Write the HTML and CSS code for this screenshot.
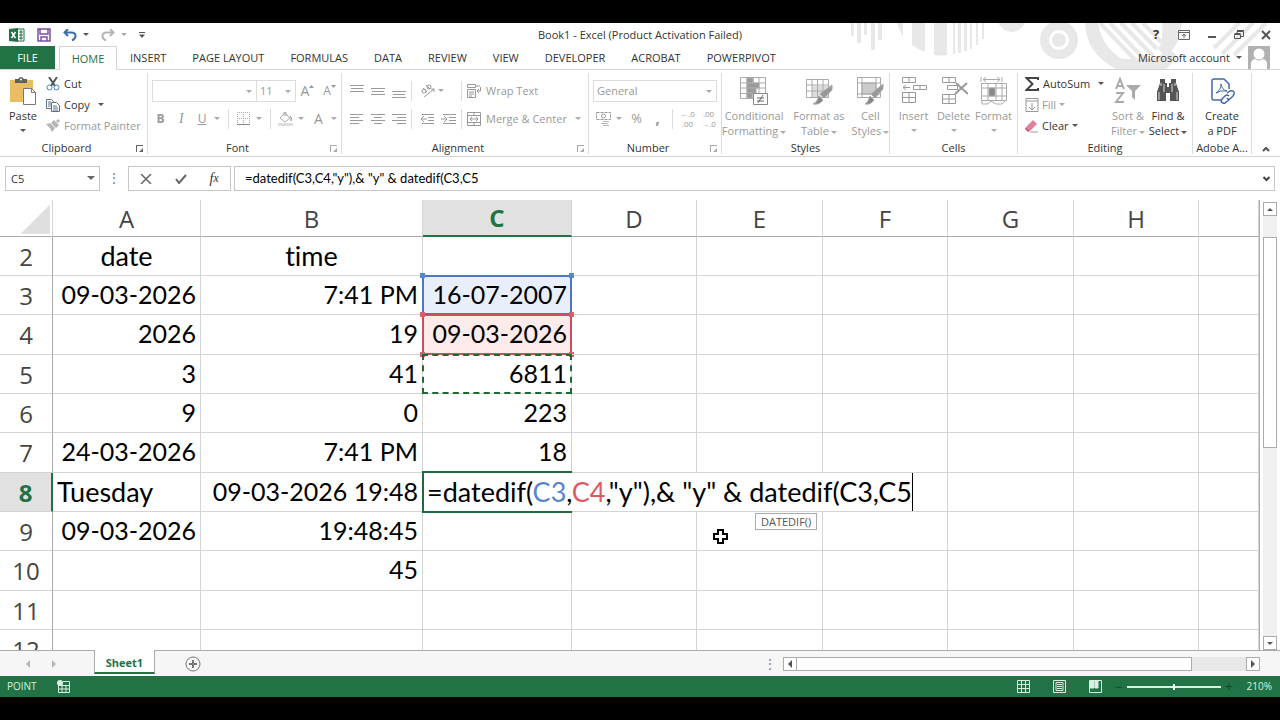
FILE: index.html
```html
<!DOCTYPE html>
<html lang="en">
<head>
  <meta charset="utf-8">
  <title>Book1 - Excel</title>
  <link rel="stylesheet" href="styles.css">
</head>
<body>
<div class="app">
  <header class="top">
    <!-- title bar decoration -->
    <svg class="decor" width="430" height="46" viewBox="850 23 430 46" fill="#e8e8e8">
      <path d="M851 23h3v13h-3zM857 23h4v20h-4zM864 23h3v12h-3zM871 23h4v27h-4zM878 23h4v17h-4zM897 23h6v14q-3-6-6-14z"/>
      <path d="M912 23h13v29q-8-3-13-7zM934 23h13v32q-7 1-13 0zM953 23h2v31h-2zM958 23h3v30h-3zM964 23h3v28h-3zM970 23h2v26h-2zM976 23h2v22h-2zM982 23h2v16h-2z"/>
      <path d="M998 23h27q-5 9-13 9t-14-9z"/>
      <circle cx="1059" cy="40" r="14.500" fill="none" stroke="#e8e8e8" stroke-width="9"/>
      <circle cx="1059" cy="40" r="7"/>
      <path d="M1085 23h13q4 24 24 36h30q10-4 18-10l8 8-12 12h-50q-30-16-31-46z"/>
      <path d="M1100 23l40 42M1110 23l38 40M1121 23l32 33M1132 23l25 26M1143 23l18 19M1234 55l32-32M1222 54l31-31M1214 48l25-25" stroke="#e8e8e8" stroke-width="4"/>
      <path d="M1162 23h20q-2 22-16 34l-8-8q6-10 4-26z"/>
    </svg>
    <div class="titlebar">
      <div class="quick">
        <svg width="16" height="14" viewBox="0 0 16 14"><path d="M8 1h7v12H8z" fill="#fff" stroke="#217346"/><path d="M10 4h4M10 7h4M10 10h4M12 2v10" stroke="#217346"/><path d="M0 1l9-1v14l-9-1z" fill="#217346"/><path d="M2.500 4l4 6M6.500 4l-4 6" stroke="#fff" stroke-width="1.500"/></svg>
        <button class="icon-btn" aria-label="Save"><svg width="14" height="14" viewBox="0 0 14 14" fill="none" stroke="#7a4fa3" stroke-width="1.500"><path d="M1 1h12v12H1zM3 1v5h8V1M4 13V9h6v4"/></svg></button>
        <button class="icon-btn" aria-label="Undo"><svg width="14" height="12" viewBox="0 0 14 12" fill="none" stroke="#3a6ea8" stroke-width="2"><path d="M5 0L1.500 3.500 5 7M2 3.500h6q5 0 4.500 4-.5 3-3.500 4"/></svg><span class="arrow dark"></span></button>
        <button class="icon-btn" aria-label="Redo"><svg width="14" height="12" viewBox="0 0 14 12" fill="none" stroke="#b5b5b5" stroke-width="2"><path d="M9 0l3.500 3.500L9 7M12 3.500H6q-5 0-4.500 4 .5 3 3.500 4"/></svg><span class="arrow"></span></button>
        <button class="icon-btn" aria-label="Customize"><svg width="6" height="6" viewBox="0 0 6 6" fill="#555"><path d="M0 0h6v1H0zM0 2.500h6L3 6z"/></svg></button>
      </div>
      <div class="title">Book1 - Excel (Product Activation Failed)</div>
      <div class="window-btns">
        <button class="icon-btn help" aria-label="Help">?</button>
        <button class="icon-btn" aria-label="Ribbon display"><svg width="12" height="10" viewBox="0 0 12 10" fill="none" stroke="#666"><path d="M.5.5h11v9H.5zM.5 2.500h11M6 8V4M4 6l2-2 2 2"/></svg></button>
        <button class="icon-btn" aria-label="Minimize"><svg width="10" height="10" viewBox="0 0 10 10"><path d="M1 6h8v2H1z" fill="#555"/></svg></button>
        <button class="icon-btn" aria-label="Restore"><svg width="10" height="10" viewBox="0 0 10 10" fill="none" stroke="#555"><path d="M.5 4.500h6v4h-6zM.5 3.500h6M3 3V1.500h6.500v5H7M3 .5h7"/></svg></button>
        <button class="icon-btn" aria-label="Close"><svg width="10" height="10" viewBox="0 0 10 10" stroke="#555" stroke-width="2"><path d="M1 1l8 8M9 1L1 9"/></svg></button>
      </div>
    </div>
    <nav class="tabs">
      <button class="tab file">FILE</button>
      <button class="tab active">HOME</button>
      <button class="tab">INSERT</button>
      <button class="tab">PAGE LAYOUT</button>
      <button class="tab">FORMULAS</button>
      <button class="tab">DATA</button>
      <button class="tab">REVIEW</button>
      <button class="tab">VIEW</button>
      <button class="tab">DEVELOPER</button>
      <button class="tab">ACROBAT</button>
      <button class="tab">POWERPIVOT</button>
      <button class="account">Microsoft account <span class="arrow dark"></span>
        <svg width="22" height="23" viewBox="0 0 22 23"><path d="M0 0h22v23H0z" fill="#b1b1b1"/><path d="M3 23v-6q1-4 5-4h6q4 0 5 4v6z" fill="#fff"/><circle cx="11" cy="8" r="6" fill="#fff" stroke="#b1b1b1"/></svg>
      </button>
    </nav>
  </header>

  <section class="ribbon">
    <div class="group clipboard">
      <div class="group-body">
        <button class="big">
          <svg width="28" height="28" viewBox="0 0 28 28"><path d="M1 3h23v22H1z" fill="#e9bd62"/><path d="M6 6V2h3q3-4 6 0h3v4z" fill="#606060"/><circle cx="12" cy="2.500" r="1" fill="#fff"/><path d="M14.500 11.500h8l4 4v12h-12z" fill="#fff" stroke="#777"/><path d="M22.500 11.500v4h4" fill="none" stroke="#777"/></svg>
          <span>Paste</span><span class="arrow dark"></span>
        </button>
        <div class="stack">
          <button class="small"><svg width="14" height="14" viewBox="0 0 14 14" fill="none"><path d="M3 0l6 9M11 0L5 9" stroke="#555" stroke-width="2"/><circle cx="3.500" cy="10.500" r="2.500" stroke="#4a7ebb"/><circle cx="10.500" cy="10.500" r="2.500" stroke="#4a7ebb"/></svg>Cut</button>
          <button class="small"><svg width="14" height="14" viewBox="0 0 14 14" fill="#fff" stroke="#5b7288"><path d="M.5 1.500h5l2 2v7h-7zM2 4h3M2 6h3M2 8h3"/><path d="M5.500 4.500h5l3 3v6h-8zM7 8h4M7 10h5M7 12h5"/></svg>Copy <span class="arrow dark"></span></button>
          <button class="small dim"><svg width="14" height="14" viewBox="0 0 14 14" fill="#b5b5b5"><path d="M0 5l4-1 5 5-3 4q-2-5-6-8zM5 4l3-3 5 5-3 3zM10 2l2-2 2 2-2 2z"/></svg>Format Painter</button>
        </div>
      </div>
      <div class="group-name wide">Clipboard<i class="launcher dark"></i></div>
    </div>

    <div class="group font">
      <div class="group-body rows">
        <div class="row">
          <label class="combo face"><select aria-label="Font"><option></option></select></label>
          <label class="combo size"><select aria-label="Font size"><option>11</option></select></label>
          <button class="tool grow" aria-label="Increase font size">A<svg width="5" height="3" viewBox="0 0 5 3"><path d="M0 3l2.500-3L5 3z" fill="#999"/></svg></button>
          <button class="tool shrink" aria-label="Decrease font size">A<svg width="5" height="3" viewBox="0 0 5 3"><path d="M0 0l2.500 3L5 0z" fill="#999"/></svg></button>
        </div>
        <div class="row">
          <button class="tool letter"><b>B</b></button>
          <button class="tool letter serif"><i>I</i></button>
          <button class="tool letter"><u>U</u></button><span class="arrow"></span>
          <span class="sep"></span>
          <button class="tool" aria-label="Borders"><svg width="13" height="13" viewBox="0 0 13 13" fill="none" stroke="#aaa"><path d="M.5 0v12M6.500 0v12M12.500 0v12M0 .5h13M0 6.500h13" stroke-dasharray="1 1"/><path d="M0 12.500h13" stroke="#888"/></svg></button><span class="arrow"></span>
          <span class="sep"></span>
          <button class="tool" aria-label="Fill color"><svg width="15" height="14" viewBox="0 0 15 14" fill="none" stroke="#aaa"><path d="M2 6l5-5 5 5-5 4zM6 4V0h2v4"/><path d="M12 4q3 2 1 5V5z" fill="#888"/><path d="M0 11h15v3H0z" fill="#ddd" stroke="none"/></svg></button><span class="arrow"></span>
          <button class="tool fontcolor">A</button><span class="arrow"></span>
        </div>
      </div>
      <div class="group-name wide">Font<i class="launcher"></i></div>
    </div>

    <div class="group align">
      <div class="group-body rows">
        <div class="row">
          <button class="tool" aria-label="Top align"><svg width="14" height="14" viewBox="0 0 14 14" stroke="#999"><path d="M0 1.500h14M1 4.500h12M0 7.500h14"/></svg></button>
          <button class="tool" aria-label="Middle align"><svg width="14" height="14" viewBox="0 0 14 14" stroke="#999"><path d="M0 4.500h14M1 7.500h12M0 10.500h14"/></svg></button>
          <button class="tool" aria-label="Bottom align"><svg width="14" height="14" viewBox="0 0 14 14" stroke="#999"><path d="M0 7.500h14M1 10.500h12M0 13.500h14"/></svg></button>
          <span class="sep"></span>
          <span class="pair">
            <button class="tool" aria-label="Orientation"><svg width="16" height="14" viewBox="0 0 16 14" fill="none" stroke="#999"><circle cx="4" cy="7" r="2"/><path d="M3 4l4 4M6 1l4 4M4 13L14 5M11 5h3v3"/><circle cx="9" cy="3" r="2"/></svg></button><span class="arrow"></span>
          </span>
          <span class="sep"></span>
          <button class="small dim"><svg width="15" height="14" viewBox="0 0 15 14" fill="none" stroke="#999"><path d="M.5.5h8v3h-8zM8 2h5M.5 5.500h8v8h-8zM2 8h5M2 10h5M2 12h3M13.500 3v4H10M12 5l-2 2 2 2"/></svg>Wrap Text</button>
        </div>
        <div class="row">
          <button class="tool" aria-label="Align left"><svg width="14" height="11" viewBox="0 0 14 11" stroke="#999"><path d="M0 1.500h13M0 4.500h9M0 7.500h13M0 10.500h9"/></svg></button>
          <button class="tool" aria-label="Center"><svg width="14" height="11" viewBox="0 0 14 11" stroke="#999"><path d="M0 1.500h14M3 4.500h8M0 7.500h14M3 10.500h8"/></svg></button>
          <button class="tool" aria-label="Align right"><svg width="14" height="11" viewBox="0 0 14 11" stroke="#999"><path d="M0 1.500h14M5 4.500h9M0 7.500h14M5 10.500h9"/></svg></button>
          <span class="sep"></span>
          <span class="pair">
            <button class="tool" aria-label="Decrease indent"><svg width="15" height="11" viewBox="0 0 15 11" fill="none" stroke="#999"><path d="M2 1.500h12M8 4.500h6M8 7.500h6M2 10.500h12M7 6H1M4 3L1 6l3 3"/></svg></button>
            <button class="tool" aria-label="Increase indent"><svg width="15" height="11" viewBox="0 0 15 11" fill="none" stroke="#999"><path d="M2 1.500h13M8 4.500h7M8 7.500h7M2 10.500h13M0 6h6M3 3l3 3-3 3"/></svg></button>
          </span>
          <span class="sep"></span>
          <button class="small dim"><svg width="15" height="14" viewBox="0 0 15 14" fill="none" stroke="#999"><path d="M.5.500h13v13H.5zM.5 3.500h13M.5 10.500h13M7 0v3M7 11v3M3 7h8M5 5L3 7l2 2M9 5l2 2-2 2"/></svg>Merge &amp; Center <span class="arrow"></span></button>
        </div>
      </div>
      <div class="group-name wide">Alignment<i class="launcher"></i></div>
    </div>

    <div class="group number">
      <div class="group-body rows">
        <div class="row">
          <label class="combo format"><select aria-label="Number format"><option>General</option></select></label>
        </div>
        <div class="row">
          <button class="tool" aria-label="Currency"><svg width="15" height="14" viewBox="0 0 15 14" fill="none" stroke="#999"><path d="M.5.500h14v7H.5z" stroke-dasharray="3 1"/><circle cx="7.500" cy="4" r="2"/><path d="M7 9.500h6M5 11.500h7M7 13.500h6" stroke="#bbb"/></svg></button><span class="arrow"></span>
          <button class="tool percent">%</button>
          <button class="tool comma">,</button>
          <span class="sep"></span>
          <button class="tool decimal">←.0<br>.00</button>
          <button class="tool decimal">.00<br>→.0</button>
        </div>
      </div>
      <div class="group-name wide">Number<i class="launcher"></i></div>
    </div>

    <div class="group styles">
      <div class="group-body">
        <button class="big dim">
          <svg width="28" height="28" viewBox="0 0 28 28" fill="none" stroke="#aaa"><path d="M.5.500h25v21H.5zM.5 6h25M.5 11h25M.5 16.500h25M7 0v21M13 0v21M19 0v21"/><path d="M7 1h6v5H7zM7 6h12v5H7zM7 11h9v5H7zM7 16h5v5H7z" fill="#999"/><path d="M13.500 16.500h14v11h-14z" fill="#fff" stroke="#888"/><path d="M17 21h7M17 24h7M23 18l-5 8" stroke="#666"/></svg>
          <span>Conditional</span><span>Formatting<i class="arrow"></i></span>
        </button>
        <button class="big dim">
          <svg width="28" height="28" viewBox="0 0 28 28" fill="none" stroke="#aaa"><path d="M7 9h17v12H7z" fill="#ddd" stroke="none"/><path d="M1.500 2.500h22v18h-22zM1.500 8h22M1.500 14h22M7 3v18M12.500 3v18M18 3v18"/><path d="M27 8v5l-8 8-4-4z" fill="#999"/><path d="M14 19l4 4q-3 5-10 4 4-1 6-8z" fill="#888"/></svg>
          <span>Format as</span><span>Table<i class="arrow"></i></span>
        </button>
        <button class="big dim">
          <svg width="28" height="28" viewBox="0 0 28 28" fill="none" stroke="#aaa"><path d="M6 6h14v11H6z" fill="#ccc"/><path d="M1.500.5h23v20h-23zM1.500 6h23M1.500 17h23M6 0v20M20 0v20"/><path d="M27 7v5l-8 9-4-4z" fill="#999"/><path d="M14 19l4 4q-3 5-9 4 3-1 5-8z" fill="#888"/></svg>
          <span>Cell</span><span>Styles<i class="arrow"></i></span>
        </button>
      </div>
      <div class="group-name">Styles</div>
    </div>

    <div class="group cells">
      <div class="group-body">
        <button class="big dim">
          <svg width="28" height="28" viewBox="0 0 28 28" fill="none" stroke="#999"><path d="M2.500.5h13v5h-13zM9 .5v5M2.500 15.500h13v10h-13zM9 15.500v10M2.500 20.500h13M13.500 8.500h13v4h-13zM20 8.500v4M10 10.500H3M6 8l-3 2.500L6 13"/></svg>
          <span>Insert</span><span class="arrow"></span>
        </button>
        <button class="big dim">
          <svg width="28" height="28" viewBox="0 0 28 28" fill="none" stroke="#999"><path d="M2.500.5h13v5h-13zM9 .5v5M2.500 17.500h13v9h-13zM9 17.500v9M2.500 22h13M7.500 8.500h10v4h-10z"/><path d="M16 6l12 11M27 6L15 17" stroke-width="2"/></svg>
          <span>Delete</span><span class="arrow"></span>
        </button>
        <button class="big dim">
          <svg width="28" height="28" viewBox="0 0 28 28" fill="none" stroke="#aaa"><path d="M1 0v5M22 0v5M3 2.500h17M6 0L3 2.500 6 5M17 0l3 2.500L17 5"/><path d="M1.500 6.500h25v17h-25zM1.500 11h25M1.500 19h25M8 6v17M16 6v17M22 6v17M2 24v3h6l3-3 5 3h6l3-3"/><path d="M9 11h6v8H9z" fill="#888"/></svg>
          <span>Format</span><span class="arrow"></span>
        </button>
      </div>
      <div class="group-name">Cells</div>
    </div>

    <div class="group editing">
      <div class="group-body">
        <div class="stack">
          <button class="small"><svg width="14" height="14" viewBox="0 0 14 14" fill="none" stroke="#444" stroke-width="2"><path d="M13 3V1H1.500l6 6-6 6H13v-2"/></svg>AutoSum <span class="arrow dark"></span></button>
          <button class="small tight dim"><svg width="14" height="14" viewBox="0 0 14 14" fill="none" stroke="#999"><path d="M1 .5h12v13H1zM1 3h12M7 5v7M4 9l3 3 3-3"/></svg>Fill <span class="arrow"></span></button>
          <button class="small tight"><svg width="14" height="14" viewBox="0 0 14 14"><path d="M1 8l7-7 4 4-7 7z" fill="#e0819b"/><path d="M1 8l4 4-2 1-3-3z" fill="#c3567a"/><path d="M5 13h8" stroke="#999"/></svg>Clear <span class="arrow dark"></span></button>
        </div>
        <button class="big dim">
          <svg width="28" height="28" viewBox="0 0 28 28" fill="none" stroke="#aaa" stroke-width="2"><path d="M2 12L6 2l4 10M3 9h6M2 16h7l-7 9h8"/><path d="M12 8h15l-6 6v9l-3-3v-6z" fill="#aaa" stroke="none"/></svg>
          <span>Sort &amp;</span><span>Filter<i class="arrow"></i></span>
        </button>
        <button class="big">
          <svg width="26" height="28" viewBox="0 0 26 28" fill="#555"><path d="M5 2h5v4h2v4h2V6h2V2h5v4l3 9v9h-9v-8h-4v8H2v-9l3-9z"/><path d="M6 6v3M20 6v3M4 15v8M22 15v8M9 7v8M17 7v8" stroke="#ddd"/></svg>
          <span>Find &amp;</span><span>Select<i class="arrow dark"></i></span>
        </button>
      </div>
      <div class="group-name">Editing</div>
    </div>

    <div class="group adobe">
      <div class="group-body">
        <button class="big">
          <svg width="28" height="28" viewBox="0 0 28 28" fill="none" stroke="#4268a8" stroke-width="1.500"><path d="M14 23H6q-2 0-2-2V4q0-2 2-2h10l5 5v5"/><path d="M8 16q5-3 5-9 1 6 6 7-7-1-11 2z" stroke-width="1"/><path d="M19 16l3-2q3-1 4 1t-1 4l-3 3q-2 1-3-1M21 19q-2-2-4 0l-3 3q-2 3 1 4 2 1 3-1l3-2"/></svg>
          <span>Create</span><span>a PDF</span>
        </button>
      </div>
      <div class="group-name">Adobe A...</div>
    </div>
    <button class="icon-btn collapse" aria-label="Collapse ribbon"><svg width="8" height="6" viewBox="0 0 8 6" fill="none" stroke="#555" stroke-width="2"><path d="M1 5l3-3 3 3"/></svg></button>
  </section>

  <section class="formula-bar">
    <label class="namebox"><select aria-label="Name box"><option>C5</option></select></label>
    <span class="dots">⋮</span>
    <div class="formula-btns">
      <button class="icon-btn" aria-label="Cancel"><svg width="12" height="10" viewBox="0 0 12 10" stroke="#666" stroke-width="1.500"><path d="M1 0l10 10M11 0L1 10"/></svg></button>
      <button class="icon-btn" aria-label="Enter"><svg width="12" height="10" viewBox="0 0 12 10" fill="none" stroke="#666" stroke-width="2"><path d="M1 5l3 4 7-8"/></svg></button>
      <button class="icon-btn fx" aria-label="Insert function">f<small>x</small></button>
    </div>
    <div class="formula-input">
      <input type="text" aria-label="Formula" value='=datedif(C3,C4,"y"),&amp; "y" &amp; datedif(C3,C5'>
      <button class="icon-btn" aria-label="Expand"><svg width="7" height="6" viewBox="0 0 7 6" fill="none" stroke="#444" stroke-width="2"><path d="M.5 1l3 3 3-3"/></svg></button>
    </div>
  </section>

  <main class="sheet">
    <div class="grid">
      <table>
        <colgroup>
          <col class="c-head"><col class="c-a"><col class="c-b"><col class="c-c"><col class="c-d"><col class="c-e"><col class="c-d"><col class="c-e"><col class="c-d"><col>
        </colgroup>
        <thead>
          <tr><th class="corner"></th><th>A</th><th>B</th><th class="selected">C</th><th>D</th><th>E</th><th>F</th><th>G</th><th>H</th><th></th></tr>
        </thead>
        <tbody>
          <tr><th>2</th><td class="word mid">date</td><td class="word mid">time</td><td></td><td></td><td></td><td></td><td></td><td></td><td></td></tr>
          <tr><th>3</th><td>09-03-2026</td><td>7:41 PM</td><td class="ref blue">16-07-2007</td><td></td><td></td><td></td><td></td><td></td><td></td></tr>
          <tr><th>4</th><td>2026</td><td>19</td><td class="ref red">09-03-2026</td><td></td><td></td><td></td><td></td><td></td><td></td></tr>
          <tr><th>5</th><td>3</td><td>41</td><td class="ants">6811</td><td></td><td></td><td></td><td></td><td></td><td></td></tr>
          <tr><th>6</th><td>9</td><td>0</td><td>223</td><td></td><td></td><td></td><td></td><td></td><td></td></tr>
          <tr><th>7</th><td>24-03-2026</td><td>7:41 PM</td><td>18</td><td></td><td></td><td></td><td></td><td></td><td></td></tr>
          <tr><th class="selected">8</th><td class="word left">Tuesday</td><td>09-03-2026 19:48</td>
            <td class="editing-cell">
              <div class="editor word"><span class="typed">=datedif(<span class="blue-text">C3</span>,<span class="red-text">C4</span>,"y"),&amp; "y" &amp; datedif(C3,C5</span></div>
              <div class="tip">DATEDIF()</div>
            </td><td></td><td></td><td></td><td></td><td></td><td></td></tr>
          <tr><th>9</th><td>09-03-2026</td><td>19:48:45</td><td></td><td></td><td><svg class="pointer" width="15" height="15" viewBox="0 0 15 15"><path d="M5 1h5v4h4v5h-4v4H5v-4H1V5h4z" fill="#fff" stroke="#000" stroke-width="2"/></svg></td><td></td><td></td><td></td><td></td></tr>
          <tr><th>10</th><td></td><td>45</td><td></td><td></td><td></td><td></td><td></td><td></td><td></td></tr>
          <tr><th>11</th><td></td><td></td><td></td><td></td><td></td><td></td><td></td><td></td><td></td></tr>
          <tr><th>12</th><td></td><td></td><td></td><td></td><td></td><td></td><td></td><td></td><td></td></tr>
        </tbody>
      </table>
    </div>
    <div class="vscroll">
      <button class="scroll-btn" aria-label="Scroll up"><i class="up"></i></button>
      <div class="vtrack"><div class="vthumb"></div></div>
      <button class="scroll-btn" aria-label="Scroll down"><i class="down"></i></button>
    </div>
  </main>

  <div class="sheetbar">
    <button class="icon-btn nav" aria-label="Previous sheet"><i class="tri-left"></i></button>
    <button class="icon-btn nav" aria-label="Next sheet"><i class="tri-right"></i></button>
    <button class="sheet-tab">Sheet1</button>
    <button class="icon-btn add" aria-label="New sheet"><svg width="16" height="16" viewBox="0 0 16 16" fill="none" stroke="#777"><circle cx="8" cy="8" r="7"/><path d="M8 4v8M4 8h8" stroke-width="2"/></svg></button>
    <span class="dots">⋮</span>
    <div class="hscroll">
      <button class="scroll-btn" aria-label="Scroll left"><i class="tri-left"></i></button>
      <div class="htrack"><div class="hthumb"></div></div>
      <button class="scroll-btn" aria-label="Scroll right"><i class="tri-right"></i></button>
    </div>
  </div>

  <footer class="status">
    <span>POINT</span>
    <svg class="macro" width="13" height="13" viewBox="0 0 13 13" fill="none" stroke="#d9f0e1"><path d="M1.500 4v8.500h11v-11H6M1 5.500h12M1 9h12M5 6v6M9 6v6"/><circle cx="3" cy="3" r="3" fill="#d9f0e1" stroke="none"/></svg>
    <div class="views">
      <button class="icon-btn" aria-label="Normal"><svg width="13" height="13" viewBox="0 0 13 13" fill="none" stroke="#d9f0e1"><path d="M.5.500h12v12H.5zM0 4.500h13M0 8.500h13M4.500 0v13M8.500 0v13"/></svg></button>
      <button class="icon-btn" aria-label="Page layout"><svg width="13" height="13" viewBox="0 0 13 13" fill="none" stroke="#d9f0e1"><path d="M.5.500h12v12H.5zM3 2.500h7v8H3zM4 4.500h5M4 6.500h5M4 8.500h5"/></svg></button>
      <button class="icon-btn" aria-label="Page break"><svg width="13" height="13" viewBox="0 0 13 13" fill="none" stroke="#d9f0e1"><path d="M.5.500h12v12H.5z"/><path d="M1 1h4v7H1zM6 1h3v7H6z" fill="#d9f0e1"/></svg></button>
    </div>
    <button class="icon-btn zoom-btn" aria-label="Zoom out">−</button>
    <input class="zoom" type="range" aria-label="Zoom" min="0" max="100" value="50">
    <button class="icon-btn zoom-btn" aria-label="Zoom in">+</button>
    <span class="percent-text">210%</span>
  </footer>
</div>
</body>
</html>
```
FILE: styles.css
```css
* {
  box-sizing: border-box;
}

body {
  margin: 0;
  background: #000;
  color: #333;
  font-family: "Open Sans", "Noto Sans", sans-serif;
  font-size: 11px;
  line-height: 15px;
}

button, select, input {
  margin: 0;
  padding: 0;
  border: 0;
  background: none;
  color: inherit;
  font: inherit;
}

svg {
  display: block;
  flex: none;
}

.app {
  display: flex;
  flex-direction: column;
  height: 100vh;
  padding: 23px 0;
}

.icon-btn {
  display: flex;
  align-items: center;
  justify-content: center;
  gap: 7px;
}

.arrow {
  display: inline-block;
  flex: none;
  border: 3px solid transparent;
  border-top-color: #aaa;
  border-bottom: 0;
  vertical-align: middle;
}

.arrow.dark {
  border-top-color: #555;
}

/* Title bar and tabs */
.top {
  position: relative;
  background: #fff;
}

.decor {
  position: absolute;
  top: 0;
  right: 0;
}

.titlebar {
  position: relative;
  display: grid;
  grid-template-columns: 1fr auto 1fr;
  align-items: center;
  height: 23px;
}

.quick {
  display: flex;
  align-items: center;
  gap: 12px;
  padding-left: 9px;
}

.quick .icon-btn {
  gap: 6px;
}

.window-btns {
  display: flex;
  justify-content: flex-end;
  gap: 17px;
  padding-right: 9px;
}

.help {
  width: 10px;
  font-size: 13px;
  font-weight: bold;
}

.tabs {
  position: relative;
  display: flex;
  height: 24px;
  border-bottom: 1px solid #d4d4d4;
}

.tab {
  height: 23px;
  padding: 0 13px;
}

.tab.file {
  width: 55px;
  margin-right: 4px;
  background: #217346;
  color: #fff;
}

.tab.active {
  width: 58px;
  height: 24px;
  padding: 0;
  border: 1px solid #d4d4d4;
  border-bottom: 0;
  background: #fff;
  color: #217346;
}

.account {
  display: flex;
  align-items: center;
  gap: 6px;
  margin-left: auto;
  padding-right: 10px;
}

/* Ribbon */
.ribbon {
  display: flex;
  height: 87px;
  border-bottom: 1px solid #d4d4d4;
  background: #fff;
}

.group {
  display: flex;
  flex-direction: column;
  margin: 3px 0 2px;
  border-right: 1px solid #dcdcdc;
}

.group-body {
  display: flex;
  justify-content: center;
  height: 69px;
}

.group-body.rows {
  flex-direction: column;
  justify-content: flex-start;
  gap: 7px;
  padding: 7px 0 0 4px;
}

.group-name {
  position: relative;
  line-height: 12px;
  text-align: center;
}

.group-name.wide {
  padding-right: 14px;
}

.launcher {
  position: absolute;
  right: 4px;
  bottom: 2px;
  width: 7px;
  height: 7px;
  border-top: 1px solid #aaa;
  border-left: 1px solid #aaa;
}

.launcher::after {
  content: "";
  position: absolute;
  right: 0;
  bottom: 0;
  border: 2px solid #aaa;
  border-top-color: transparent;
  border-left-color: transparent;
}

.launcher.dark, .launcher.dark::after {
  border-right-color: #666;
  border-bottom-color: #666;
}

.launcher.dark {
  border-color: #666;
  border-right: 0;
  border-bottom: 0;
}

.clipboard { width: 148px; }
.font { width: 194px; }
.align { width: 247px; }
.number { width: 133px; }
.styles { width: 168px; }
.cells { width: 128px; }
.editing { width: 175px; }
.adobe { width: 59px; }

.row {
  display: flex;
  align-items: center;
  height: 21px;
}

.row > .arrow {
  margin: 0 4px 0 2px;
}

.big {
  display: flex;
  flex-direction: column;
  align-items: center;
  padding-top: 4px;
  white-space: nowrap;
}

.big svg {
  margin-bottom: 3px;
}

.big > .arrow {
  margin-top: 6px;
}

.big .arrow {
  border-width: 3px 3px 0;
}

.big span .arrow {
  margin-left: 2px;
}

.stack {
  display: flex;
  flex-direction: column;
}

.small {
  display: flex;
  align-items: center;
  gap: 4px;
  height: 21px;
  white-space: nowrap;
}

.small .arrow {
  margin-left: 4px;
}

.small.tight {
  gap: 3px;
}

.small.tight .arrow {
  margin-left: 0;
}

.dim {
  color: #999;
}

.clipboard .group-body {
  justify-content: flex-start;
  padding-left: 4px;
}

.clipboard .big {
  width: 38px;
  margin-right: 4px;
}

.tool {
  display: flex;
  align-items: center;
  justify-content: center;
  width: 21px;
  height: 20px;
  color: #999;
}

.sep {
  width: 1px;
  height: 20px;
  margin: 0 4px;
  background: #dcdcdc;
}

.align .sep {
  margin: 0 5px 0 2px;
}

.pair {
  display: flex;
  align-items: center;
  width: 42px;
}

.combo {
  position: relative;
  display: block;
  height: 22px;
  border: 1px solid #dcdcdc;
  color: #999;
}

.combo select, .namebox select {
  width: 100%;
  height: 100%;
  padding-left: 3px;
  appearance: none;
}

.combo::after, .namebox::after {
  content: "";
  position: absolute;
  top: 9px;
  right: 4px;
  border: 3px solid transparent;
  border-top-color: #aaa;
  border-bottom: 0;
}

.face {
  width: 105px;
}

.size {
  width: 39px;
  border-left: 0;
}

.format {
  width: 124px;
}

.grow, .shrink {
  margin-left: 1px;
  font-size: 14px;
}

.shrink {
  font-size: 12px;
}

.grow svg, .shrink svg {
  margin-bottom: 9px;
}

.font .row + .row {
  margin-left: -2px;
}

.letter {
  font-size: 12px;
}

.serif {
  font-family: "Liberation Serif", serif;
  font-size: 14px;
}

.fontcolor {
  font-size: 14px;
}

.percent {
  font-size: 13px;
}

.comma {
  font-size: 16px;
  font-weight: bold;
}

.decimal {
  font-size: 8px;
  line-height: 10px;
}

.styles .group-body {
  gap: 7px;
}

.cells .group-body {
  gap: 4px;
}

.cells .big {
  width: 36px;
}

.editing .group-body {
  justify-content: flex-start;
  padding-left: 7px;
}

.editing .stack {
  width: 83px;
}

.editing .big {
  width: 40px;
}

.collapse {
  align-self: flex-end;
  margin: 0 auto;
  height: 14px;
}

/* Formula bar */
.formula-bar {
  display: flex;
  gap: 3px;
  height: 43px;
  padding: 9px 5px 9px;
  background: #fff;
}

.namebox, .formula-btns, .formula-input {
  position: relative;
  display: flex;
  border: 1px solid #c6c6c6;
}

.namebox {
  width: 95px;
}

.namebox select {
  padding-left: 5px;
}

.namebox::after {
  border-width: 4px 4px 0;
  border-top-color: #666;
}

.dots {
  width: 22px;
  color: #888;
  font-size: 14px;
  line-height: 24px;
  text-align: center;
}

.formula-btns {
  width: 103px;
  justify-content: space-around;
}

.fx {
  gap: 0;
  font-family: "Liberation Serif", serif;
  font-size: 14px;
  font-style: italic;
}

.formula-input {
  flex: 1;
  padding: 0 4px 0 10px;
}

.formula-input input {
  flex: 1;
  color: #000;
  font-family: Lato, sans-serif;
  font-size: 13px;
}

/* Sheet */
.sheet {
  display: flex;
  flex: 1;
  min-height: 0;
  background: #fff;
}

.grid {
  flex: 1;
  min-width: 0;
  overflow: hidden;
  border-right: 1px solid #ababab;
}

table {
  width: 100%;
  border-spacing: 0;
  table-layout: fixed;
  color: #000;
  font-family: Lato, sans-serif;
  font-size: 25px;
  font-variant-ligatures: none;
  line-height: 35px;
}

.c-head { width: 53px; }
.c-a { width: 148px; }
.c-b { width: 222px; }
.c-c { width: 149px; }
.c-d { width: 125px; }
.c-e { width: 126px; }

th {
  padding: 0;
  border-right: 1px solid #d4d4d4;
  border-bottom: 1px solid #ababab;
  color: #444;
  font-family: "Open Sans", "Noto Sans", sans-serif;
  font-size: 24px;
  font-weight: normal;
}

thead th {
  height: 37px;
}

tbody tr {
  height: 39px;
}

tbody tr:nth-child(3n) {
  height: 40px;
}

tbody th {
  border-right-color: #ababab;
  border-bottom-color: #d4d4d4;
}

th.selected {
  background: #e1e1e1;
  color: #217346;
  font-weight: bold;
}

thead .selected {
  border-bottom: 2px solid #217346;
}

tbody .selected {
  border-right: 2px solid #217346;
}

.corner {
  background: linear-gradient(135deg, transparent 50%, #dfdfdf 50%) 20px 4px / 30px 30px no-repeat;
}

td {
  position: relative;
  padding: 0 4px 2px;
  border-right: 1px solid #d4d4d4;
  border-bottom: 1px solid #d4d4d4;
  text-align: right;
  white-space: nowrap;
}

.word {
  font-size: 27px;
}

.mid {
  text-align: center;
}

.left {
  text-align: left;
}

/* Cells used by the formula */
.ref::before, .ants::before {
  content: "";
  position: absolute;
  inset: -1px;
  border: 2px solid #4a78c4;
}

.ref::after {
  content: "";
  position: absolute;
  inset: -3px;
  background:
    linear-gradient(#5b84cf, #5b84cf) 0 0 / 5px 5px,
    linear-gradient(#5b84cf, #5b84cf) 100% 0 / 5px 5px;
  background-repeat: no-repeat;
}

.blue {
  background: #e9effa;
}

.red {
  background: #fdeaea;
}

.red::before {
  border-color: #c9505f;
}

.red::after {
  background:
    linear-gradient(#d9606b, #d9606b) 0 0 / 5px 5px,
    linear-gradient(#d9606b, #d9606b) 100% 0 / 5px 5px,
    linear-gradient(#d9606b, #d9606b) 0 100% / 5px 5px,
    linear-gradient(#d9606b, #d9606b) 100% 100% / 5px 5px;
  background-repeat: no-repeat;
}

.ants::before {
  border: 2px dashed #1c6b2e;
}

.editing-cell::before {
  content: "";
  position: absolute;
  z-index: 2;
  inset: -2px -1px -2px -1px;
  border: 2px solid #1c6b40;
  border-right: 0;
}

.editor {
  position: absolute;
  z-index: 1;
  top: 0;
  left: 0;
  width: 524px;
  height: 38px;
  padding-left: 4px;
  background: #fff;
  text-align: left;
}

.typed {
  display: inline-block;
  height: 38px;
  border-right: 1px solid #000;
  line-height: 37px;
}

.blue-text {
  color: #5b84cf;
}

.red-text {
  color: #dd5a64;
}

.tip {
  position: absolute;
  z-index: 3;
  top: 40px;
  left: 332px;
  height: 17px;
  padding: 0 5px;
  border: 1px solid #ababab;
  background: #fff;
  color: #555;
  font-family: "Open Sans", "Noto Sans", sans-serif;
  font-size: 11px;
  line-height: 15px;
}

.pointer {
  position: absolute;
  top: 17px;
  left: 16px;
}

/* Scroll bars */
.vscroll {
  display: flex;
  flex-direction: column;
  width: 20px;
  padding: 2px 3px 0;
}

.scroll-btn {
  display: flex;
  align-items: center;
  justify-content: center;
  width: 14px;
  height: 14px;
  border: 1px solid #ababab;
  background: #fff;
}

.vtrack {
  flex: 1;
  padding-top: 21px;
  background: #f0f0f0;
}

.vthumb {
  height: 53%;
  border: 1px solid #ababab;
  background: #fff;
}

.up, .down {
  border: 3px solid transparent;
}

.up {
  border-top: 0;
  border-bottom-color: #555;
}

.down {
  border-bottom: 0;
  border-top-color: #555;
}

.tri-left, .tri-right {
  border: 4px solid transparent;
}

.tri-left {
  border-left: 0;
  border-right-color: #555;
}

.tri-right {
  border-right: 0;
  border-left-color: #555;
}

.sheetbar {
  display: flex;
  align-items: center;
  height: 26px;
  border-top: 1px solid #ababab;
  background: #f6f6f6;
}

.nav {
  width: 26px;
}

.nav:first-child {
  margin-left: 15px;
}

.nav i {
  opacity: .4;
}

.sheet-tab {
  align-self: flex-start;
  width: 61px;
  height: 24px;
  margin: -1px 30px 0 27px;
  padding-top: 2px;
  border: 1px solid #ababab;
  border-top: 0;
  border-bottom: 2px solid #217346;
  background: #fff;
  color: #217346;
  font-weight: bold;
}

.sheetbar .dots {
  margin-left: auto;
}

.hscroll {
  display: flex;
  width: 39%;
  padding: 0 20px 0 2px;
}

.htrack {
  flex: 1;
  background: #e8e8e8;
}

.hthumb {
  width: 88%;
  height: 14px;
  border: 1px solid #ababab;
  border-left: 0;
  background: #fff;
}

/* Status bar */
.status {
  display: flex;
  align-items: center;
  height: 21px;
  padding: 0 8px 0 7px;
  background: #217346;
  color: #d9f0e1;
  font-size: 10px;
}

.macro {
  margin-left: 20px;
}

.views {
  display: flex;
  gap: 23px;
  margin: 0 10px 0 auto;
}

.zoom-btn {
  width: 14px;
  color: #0f4a28;
  font-size: 14px;
}

.zoom {
  width: 94px;
  height: 10px;
  margin: 0 1px;
  background: linear-gradient(#d9f0e1, #d9f0e1) 0 4px / 100% 2px no-repeat;
  appearance: none;
}

.zoom::-webkit-slider-thumb {
  width: 2px;
  height: 6px;
  background: #fff;
  appearance: none;
}

.percent-text {
  width: 30px;
  margin-left: 6px;
  text-align: right;
}
```
